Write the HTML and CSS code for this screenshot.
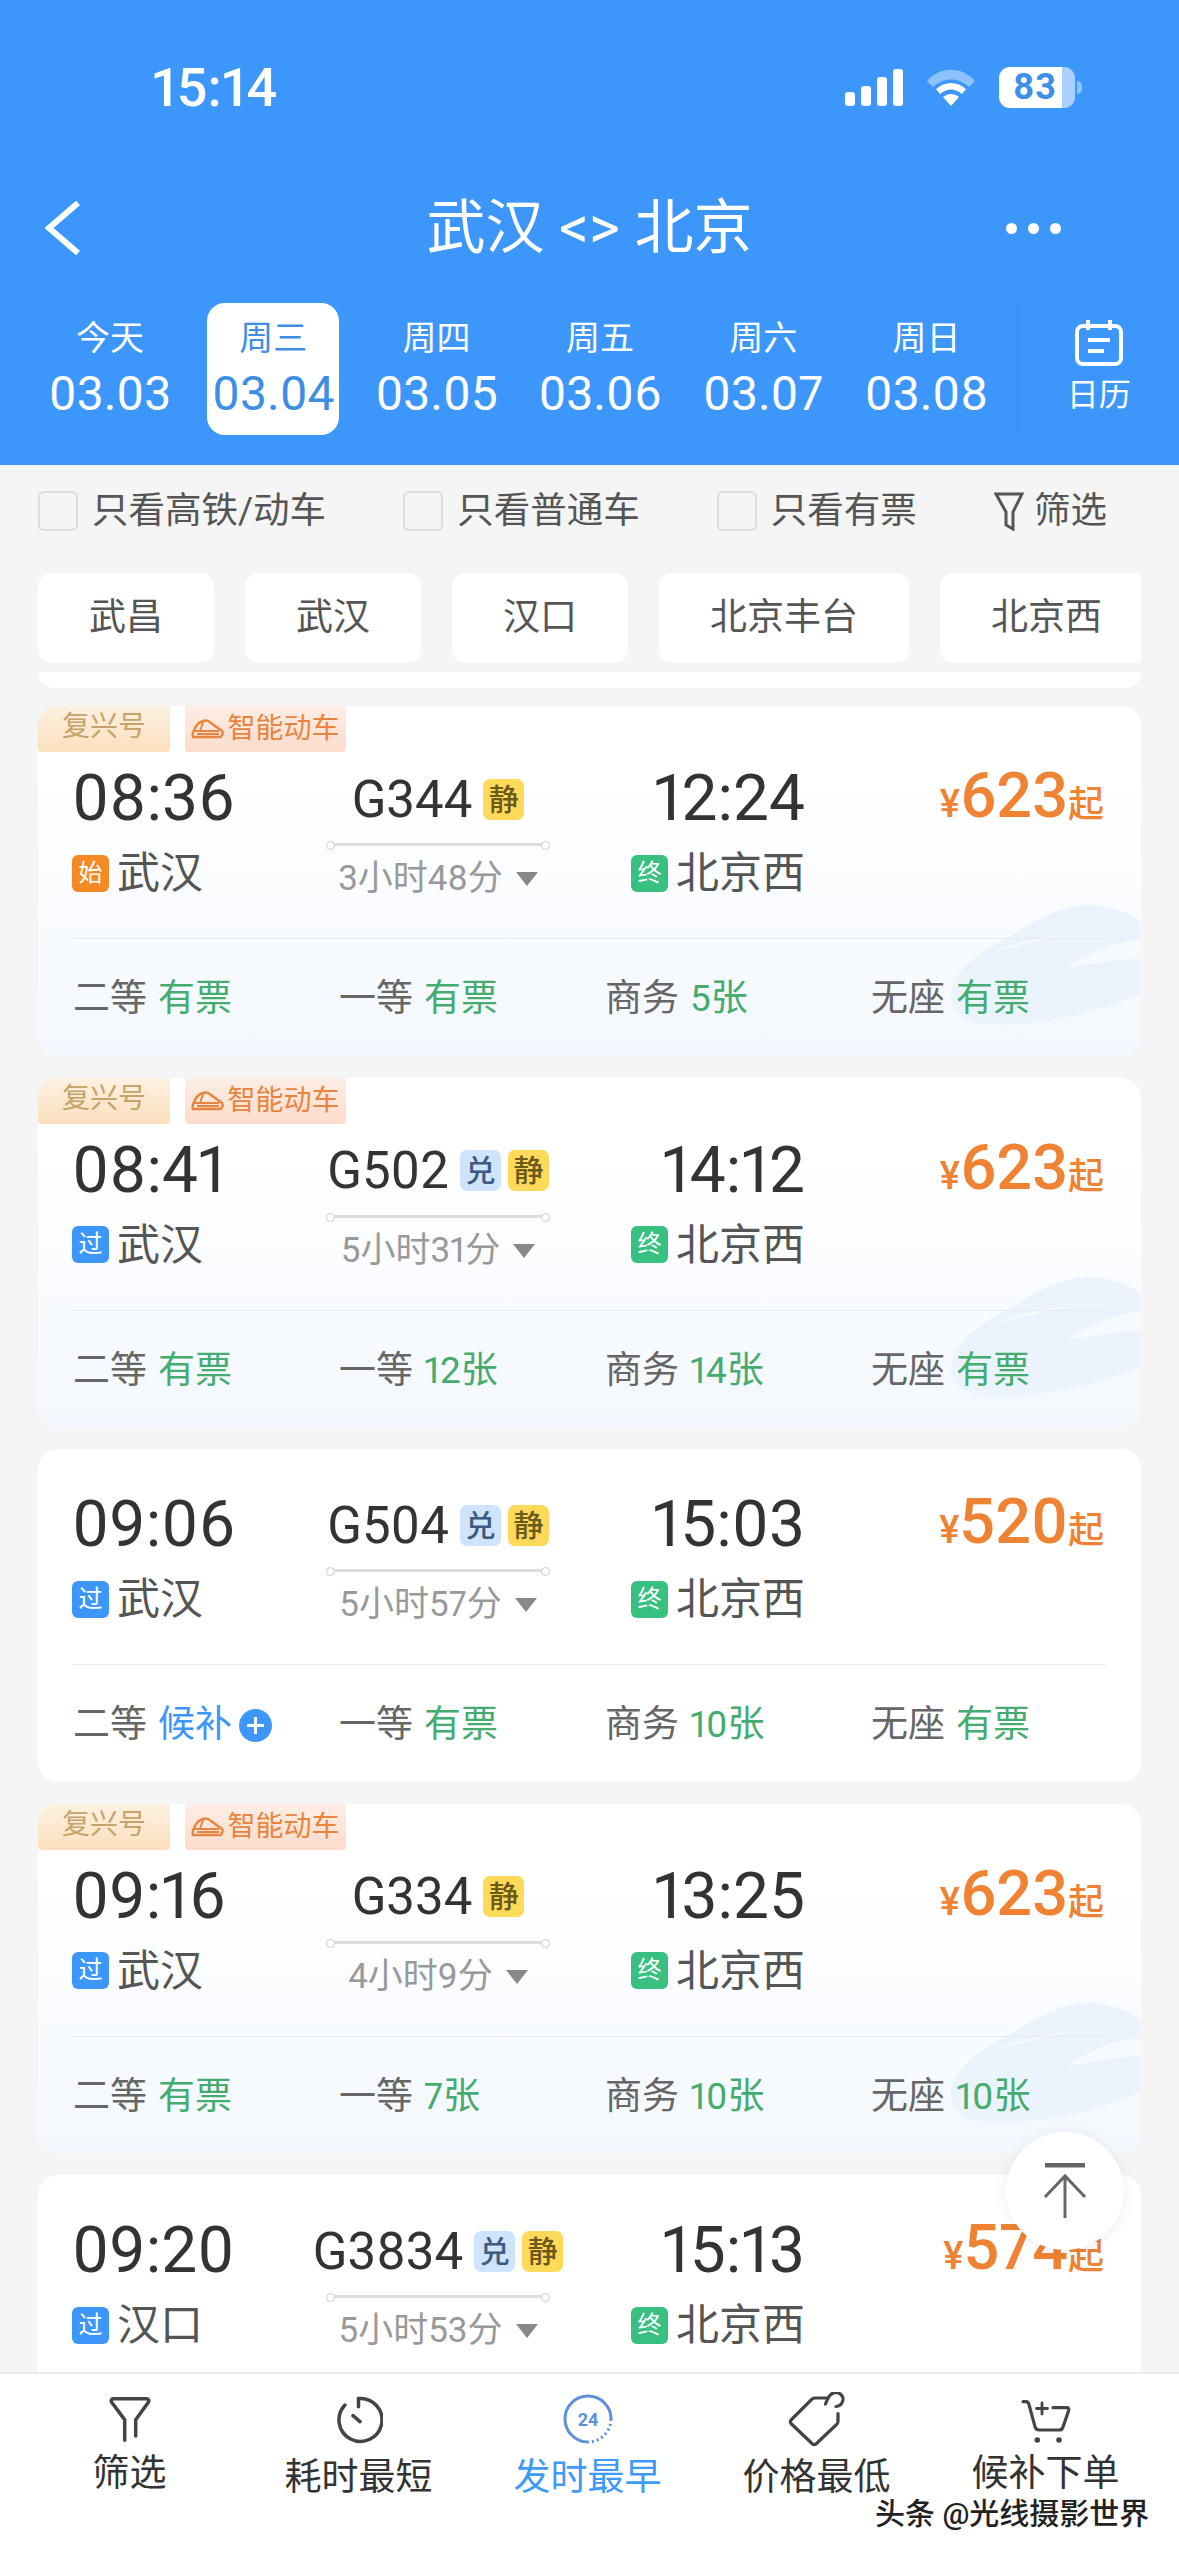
FILE: index.html
```html
<!DOCTYPE html>
<html lang="zh-CN">
<head>
    <meta charset="UTF-8">
    <meta name="viewport" content="width=device-width, initial-scale=1.0">
    <title>武汉 - 北京</title>
    <link rel="stylesheet" href="styles.css">
</head>
<body>
    <svg class="defs" width="0" height="0">
        <symbol id="swoosh" viewBox="0 0 190 122">
            <path d="M190 17C170 4 150 0 135 1 105 3 80 20 55 35 30 48 5 65 1 88c-2 18 12 30 35 32 50 3 110-10 154-30z" fill="#ebf4fd"/>
            <path d="M117 64c20-14 45-26 73-28v18c-25 2-50 6-73 10z" fill="#f6fafe"/>
            <path d="M40 49c25-10 50-16 78-19-25 6-50 12-78 19z" fill="#f6fafe"/>
        </symbol>
        <symbol id="mini-train" viewBox="0 0 33 20">
            <path d="M2 18c-1-2 0-5 1-7 2-5 5-8 9-9 3-1 6 0 8 2l11 8c1 1 1 3 0 4-.4 1-1 2-2 2z" fill="none" stroke="currentColor" stroke-width="2.4"/>
            <path d="M3 12h25M12 3l-3 9M6 15h22" fill="none" stroke="currentColor" stroke-width="2"/>
        </symbol>
    </svg>

    <div class="page">
        <header class="header">
            <div class="status">
                <span class="clock">15:14</span>
                <div class="status-icons">
                    <svg class="signal" viewBox="0 0 58 37" width="58" height="37">
                        <rect x="0" y="23" width="10" height="14" rx="3"/>
                        <rect x="16" y="17" width="10" height="20" rx="3"/>
                        <rect x="32" y="8" width="10" height="29" rx="3"/>
                        <rect x="48" y="0" width="10" height="37" rx="3"/>
                    </svg>
                    <svg class="wifi" viewBox="0 0 50 37" width="50" height="37">
                        <path d="M1 12C14-3 36-3 49 12l-6 6C32 8 18 8 7 18z" fill="#8cc2fd"/>
                        <path d="M10 20c9-8 21-8 30 0l-4 5c-7-6-15-6-22 0z"/>
                        <path d="M17 28c5-4 11-4 16 0l-8 9z"/>
                    </svg>
                    <div class="battery"><span>83</span></div>
                </div>
            </div>

            <div class="nav">
                <svg class="back" viewBox="0 0 36 54" width="36" height="54"><path d="M33 2L4 27l29 25" fill="none" stroke="#fff" stroke-width="6"/></svg>
                <h1>武汉 &lt;&gt; 北京</h1>
                <div class="more"><i></i><i></i><i></i></div>
            </div>

            <div class="dates">
                <div class="date-tab"><span>今天</span><b>03.03</b></div>
                <div class="date-tab active"><span>周三</span><b>03.04</b></div>
                <div class="date-tab"><span>周四</span><b>03.05</b></div>
                <div class="date-tab"><span>周五</span><b>03.06</b></div>
                <div class="date-tab"><span>周六</span><b>03.07</b></div>
                <div class="date-tab"><span>周日</span><b>03.08</b></div>
                <div class="calendar">
                    <svg viewBox="0 0 48 46" width="48" height="46" fill="none" stroke="#fff" stroke-width="4">
                        <rect x="2" y="6" width="44" height="38" rx="6"/>
                        <path d="M13 0v10M35 0v10M13 20h22M13 31h16"/>
                    </svg>
                    <span>日历</span>
                </div>
            </div>
        </header>

        <div class="filters">
            <label class="check"><i></i>只看高铁/动车</label>
            <label class="check"><i></i>只看普通车</label>
            <label class="check"><i></i>只看有票</label>
            <div class="check funnel">
                <svg viewBox="0 0 30 40" width="30" height="40" fill="none" stroke="#555" stroke-width="3"><path d="M2 3h26L19 21v17l-7-4V21z"/></svg>
                筛选
            </div>
        </div>

        <div class="stations">
            <div class="station-chip">武昌</div>
            <div class="station-chip">武汉</div>
            <div class="station-chip">汉口</div>
            <div class="station-chip">北京丰台</div>
            <div class="station-chip">北京西</div>
        </div>

        <div class="list">
            <div class="card-end"></div>

            <div class="card fuxing">
                <svg class="swoosh"><use href="#swoosh"/></svg>
                <div class="labels"><span class="label-fx">复兴号</span><span class="label-smart"><svg width="33" height="20"><use href="#mini-train"/></svg>智能动车</span></div>
                <div class="info">
                    <div class="dep"><div class="time">08:36</div><div class="place"><i class="st start">始</i>武汉</div></div>
                    <div class="mid">
                        <div class="train">G344<i class="mark quiet">静</i></div>
                        <div class="line"></div>
                        <div class="duration">3小时48分<i class="caret"></i></div>
                    </div>
                    <div class="arr"><div class="time">12:24</div><div class="place"><i class="st end">终</i>北京西</div></div>
                    <div class="price"><small>¥</small>623<em>起</em></div>
                </div>
                <div class="seats">
                    <div class="seat">二等 <b>有票</b></div>
                    <div class="seat">一等 <b>有票</b></div>
                    <div class="seat">商务 <b>5张</b></div>
                    <div class="seat">无座 <b>有票</b></div>
                </div>
            </div>

            <div class="card fuxing">
                <svg class="swoosh"><use href="#swoosh"/></svg>
                <div class="labels"><span class="label-fx">复兴号</span><span class="label-smart"><svg width="33" height="20"><use href="#mini-train"/></svg>智能动车</span></div>
                <div class="info">
                    <div class="dep"><div class="time">08:41</div><div class="place"><i class="st pass">过</i>武汉</div></div>
                    <div class="mid">
                        <div class="train">G502<i class="mark swap">兑</i><i class="mark quiet">静</i></div>
                        <div class="line"></div>
                        <div class="duration">5小时31分<i class="caret"></i></div>
                    </div>
                    <div class="arr"><div class="time">14:12</div><div class="place"><i class="st end">终</i>北京西</div></div>
                    <div class="price"><small>¥</small>623<em>起</em></div>
                </div>
                <div class="seats">
                    <div class="seat">二等 <b>有票</b></div>
                    <div class="seat">一等 <b>12张</b></div>
                    <div class="seat">商务 <b>14张</b></div>
                    <div class="seat">无座 <b>有票</b></div>
                </div>
            </div>

            <div class="card">
                <div class="info">
                    <div class="dep"><div class="time">09:06</div><div class="place"><i class="st pass">过</i>武汉</div></div>
                    <div class="mid">
                        <div class="train">G504<i class="mark swap">兑</i><i class="mark quiet">静</i></div>
                        <div class="line"></div>
                        <div class="duration">5小时57分<i class="caret"></i></div>
                    </div>
                    <div class="arr"><div class="time">15:03</div><div class="place"><i class="st end">终</i>北京西</div></div>
                    <div class="price"><small>¥</small>520<em>起</em></div>
                </div>
                <div class="seats">
                    <div class="seat">二等 <b class="wait">候补</b><i class="plus"></i></div>
                    <div class="seat">一等 <b>有票</b></div>
                    <div class="seat">商务 <b>10张</b></div>
                    <div class="seat">无座 <b>有票</b></div>
                </div>
            </div>

            <div class="card fuxing">
                <svg class="swoosh"><use href="#swoosh"/></svg>
                <div class="labels"><span class="label-fx">复兴号</span><span class="label-smart"><svg width="33" height="20"><use href="#mini-train"/></svg>智能动车</span></div>
                <div class="info">
                    <div class="dep"><div class="time">09:16</div><div class="place"><i class="st pass">过</i>武汉</div></div>
                    <div class="mid">
                        <div class="train">G334<i class="mark quiet">静</i></div>
                        <div class="line"></div>
                        <div class="duration">4小时9分<i class="caret"></i></div>
                    </div>
                    <div class="arr"><div class="time">13:25</div><div class="place"><i class="st end">终</i>北京西</div></div>
                    <div class="price"><small>¥</small>623<em>起</em></div>
                </div>
                <div class="seats">
                    <div class="seat">二等 <b>有票</b></div>
                    <div class="seat">一等 <b>7张</b></div>
                    <div class="seat">商务 <b>10张</b></div>
                    <div class="seat">无座 <b>10张</b></div>
                </div>
            </div>

            <div class="card">
                <div class="info">
                    <div class="dep"><div class="time">09:20</div><div class="place"><i class="st pass">过</i>汉口</div></div>
                    <div class="mid">
                        <div class="train">G3834<i class="mark swap">兑</i><i class="mark quiet">静</i></div>
                        <div class="line"></div>
                        <div class="duration">5小时53分<i class="caret"></i></div>
                    </div>
                    <div class="arr"><div class="time">15:13</div><div class="place"><i class="st end">终</i>北京西</div></div>
                    <div class="price"><small>¥</small>574<em>起</em></div>
                </div>
            </div>
        </div>

        <div class="to-top">
            <svg viewBox="0 0 44 56" width="44" height="56" fill="none" stroke="#666">
                <path d="M2 2h40" stroke-width="5"/>
                <path d="M22 55V14M2 34l20-21 20 21" stroke-width="3"/>
            </svg>
        </div>

        <nav class="tabbar">
            <div class="tab first">
                <svg viewBox="0 0 42 48" width="42" height="48" fill="none" stroke="#444" stroke-width="3.5" stroke-linecap="round"><path d="M15.7 44.3V23.7L2.5 6c-.8-1.5 0-3.3 2-3.3h33c2 0 2.8 1.8 2 3.3L26.7 23.7V40"/></svg>
                <span>筛选</span>
            </div>
            <div class="tab">
                <svg class="raised" viewBox="0 0 48 48" width="48" height="48" fill="none" stroke="#444" stroke-width="3.5" stroke-linecap="round"><path d="M10 9A21.5 21.5 0 1 0 23.5 2.5v8.2M18 19.7l7 6"/></svg>
                <span>耗时最短</span>
            </div>
            <div class="tab current">
                <svg class="raised" viewBox="0 0 50 50" width="50" height="50" fill="none" stroke="#5f8fdc" stroke-width="3">
                    <path d="M25 48A23 23 0 1 1 48 25"/>
                    <path d="M48 25A23 23 0 0 1 25 48" stroke-dasharray="2 3"/>
                    <text class="icon-num" x="25" y="32" text-anchor="middle">24</text>
                </svg>
                <span>发时最早</span>
            </div>
            <div class="tab">
                <svg viewBox="0 0 58 56" width="58" height="56" fill="none" stroke="#444" stroke-width="3.2" stroke-linecap="round"><path d="M40 6H27c-1 0-2 .4-3 1L3.500 27.500c-1.500 1.500-1.500 3 0 4.500L24 51.500c1.500 1.500 3 1.500 4.500 0L48 33c1.300-1 2-2 2-3.500v-8"/><path d="M37.500 12c2-5 4-11 10-11.500 5 0 8 4 7.500 7.500-.5 3-3 6-7 6.500"/></svg>
                <span>价格最低</span>
            </div>
            <div class="tab last">
                <svg viewBox="0 0 56 46" width="56" height="46" fill="none" stroke="#444" stroke-width="3.2" stroke-linecap="round"><path d="M5 3.700h3c2 0 2.500 1 3 3l6 22c.6 2.500 2 3.300 4 3.300h20c2.500 0 3.500-1 4-3l5.500-16c.8-2.500 0-3.300-2-3.300H35"/><path d="M24 5v11M18.500 10.500h11" stroke-width="2.800"/><circle cx="19.300" cy="42" r="2.800" fill="#444" stroke="none"/><circle cx="41" cy="42" r="2.800" fill="#444" stroke="none"/></svg>
                <span>候补下单</span>
            </div>
        </nav>

        <div class="credit">头条 @光线摄影世界</div>
    </div>
</body>
</html>
```

FILE: styles.css
```css
* {
    box-sizing: border-box;
}
html, body {
    margin: 0;
    padding: 0;
}
body {
    font-family: Roboto, "Noto Sans CJK SC", sans-serif;
    font-variant-numeric: proportional-nums;
    background: #f5f5f5;
    color: #555;
}
i, em {
    font-style: normal;
}
.defs {
    position: absolute;
}
.page {
    position: relative;
    width: 1179px;
    height: 2556px;
    display: flex;
    flex-direction: column;
    overflow: hidden;
    background: #f5f5f5;
}

/* header */
.header {
    height: 465px;
    flex: none;
    background: #3d97fb;
    color: #fff;
    overflow: hidden;
}
.status {
    height: 174px;
    display: flex;
    align-items: center;
    justify-content: space-between;
    padding: 0 104px 0 152px;
}
.clock {
    font-size: 54px;
    font-weight: 500;
}
.status-icons {
    display: flex;
    align-items: center;
    gap: 23px;
}
.signal, .wifi {
    fill: #fff;
}
.battery {
    position: relative;
    width: 76px;
    height: 41px;
    border-radius: 11px;
    background: linear-gradient(to right, #fff 83%, #a8d0fd 83%);
    color: #3d8fe8;
    font-size: 36px;
    font-weight: 700;
    letter-spacing: 1px;
    line-height: 41px;
    padding-left: 14px;
}
.battery::after {
    content: "";
    position: absolute;
    left: 78px;
    top: 14px;
    width: 5px;
    height: 13px;
    border-radius: 0 6px 6px 0;
    background: #8cc2fd;
}
.nav {
    height: 108px;
    position: relative;
    display: flex;
    align-items: center;
    justify-content: center;
}
.nav h1 {
    margin: 0;
    font-size: 59px;
    font-weight: 400;
    line-height: 70px;
}
.back {
    position: absolute;
    left: 45px;
    top: 27px;
}
.more {
    position: absolute;
    left: 1006px;
    top: 49px;
    display: flex;
    gap: 11px;
}
.more i {
    width: 11px;
    height: 11px;
    border-radius: 50%;
    background: #fff;
}
.dates {
    display: flex;
    margin-top: 21px;
    padding-left: 44px;
    gap: 31.3px;
}
.date-tab {
    flex: none;
    width: 132px;
    height: 132px;
    display: flex;
    flex-direction: column;
    align-items: center;
    padding-top: 13px;
    border-radius: 18px;
}
.date-tab span {
    font-size: 34px;
    line-height: 44px;
}
.date-tab b {
    font-size: 48px;
    font-weight: 400;
    line-height: 56px;
    margin-top: 6px;
}
.date-tab.active {
    background: #fff;
    color: #3d8ee4;
}
.calendar {
    flex: none;
    width: 166px;
    margin-left: -8px;
    padding-top: 17px;
    display: flex;
    flex-direction: column;
    align-items: center;
    background: linear-gradient(to right, rgba(30, 90, 190, .06), rgba(30, 90, 190, 0) 22px);
}
.calendar span {
    font-size: 32px;
    line-height: 44px;
    margin-top: 7px;
}

/* filters */
.filters {
    height: 92px;
    flex: none;
    display: flex;
    align-items: center;
    justify-content: space-between;
    padding: 0 72px 0 38px;
    font-size: 36.5px;
}
.check {
    display: flex;
    align-items: center;
    gap: 14px;
    line-height: 48px;
}
.check i {
    width: 40px;
    height: 40px;
    border: 2px solid #ddd;
    border-radius: 6px;
    background: #f5f5f5;
}
.funnel {
    gap: 10px;
}
.stations {
    width: 1141px;
    flex: none;
    display: flex;
    gap: 31px;
    margin-top: 16px;
    padding-left: 38px;
    overflow: hidden;
}
.station-chip {
    flex: none;
    height: 90px;
    padding: 0 51px;
    border-radius: 14px;
    background: #fff;
    font-size: 37px;
    line-height: 90px;
    white-space: nowrap;
}

/* train list */
.list {
    flex: 1;
    min-height: 0;
    margin-top: 9px;
    padding: 0 38px;
    overflow: hidden;
    display: flex;
    flex-direction: column;
    gap: 21.5px;
}
.card-end {
    height: 16px;
    flex: none;
    margin-bottom: -3.5px;
    background: #fff;
    border-radius: 0 0 18px 18px;
}
.card {
    position: relative;
    flex: none;
    padding: 44px 35px 37px;
    border-radius: 20px;
    overflow: hidden;
    background: #fff;
}
.card.fuxing {
    padding-top: 0;
    background: linear-gradient(#fff 20%, #f3f8fe 100%);
}
.swoosh {
    position: absolute;
    right: 1px;
    bottom: 30px;
    width: 190px;
    height: 122px;
}
.labels {
    position: relative;
    margin: 0 -35px 15px;
    height: 46px;
    display: flex;
    gap: 15px;
    font-size: 28px;
    line-height: 42px;
}
.label-fx {
    width: 132px;
    text-align: center;
    color: #c6a368;
    border-radius: 0 0 4px 4px;
    background: linear-gradient(#fdf1e2, #fbdfbd);
}
.label-smart {
    width: 161px;
    display: flex;
    align-items: center;
    justify-content: center;
    gap: 3px;
    color: #e8843e;
    border-radius: 0 0 4px 4px;
    background: linear-gradient(#fdeee6, #fbdccb);
}
.info {
    position: relative;
    display: flex;
}
.dep {
    width: 256px;
}
.dep .time {
    margin-left: -1px;
}
.arr {
    width: 258px;
    display: flex;
    flex-direction: column;
    align-items: flex-end;
}
.time {
    font-size: 64px;
    line-height: 64px;
    color: #333;
}
.place {
    display: flex;
    align-items: center;
    height: 40px;
    margin-top: 22px;
    font-size: 43px;
    line-height: 40px;
    color: #555;
}
.st {
    width: 37px;
    height: 37px;
    margin-right: 8px;
    margin-left: -1px;
    border-radius: 6px;
    color: #fff;
    font-size: 24px;
    line-height: 37px;
    text-align: center;
}
.st.start {
    background: #f58a24;
}
.st.pass {
    background: #3d97fb;
}
.st.end {
    background: #37c07f;
}
.mid {
    width: 218px;
    display: flex;
    flex-direction: column;
    align-items: center;
}
.train {
    height: 64px;
    display: flex;
    align-items: center;
    justify-content: center;
    font-size: 51px;
    color: #333;
    white-space: nowrap;
}
.mark {
    width: 41px;
    height: 41px;
    margin-left: 7px;
    border-radius: 7px;
    font-size: 30px;
    font-weight: 500;
    line-height: 41px;
    text-align: center;
}
.train .mark:first-of-type {
    margin-left: 11px;
}
.mark.quiet {
    background: #ffd95a;
    color: #6b5a1a;
}
.mark.swap {
    background: #cfe3fb;
    color: #3d5a80;
}
.line {
    position: relative;
    width: 100%;
    height: 3px;
    margin-top: 12px;
    background: #ddd;
}
.line::before, .line::after {
    content: "";
    position: absolute;
    top: -2px;
    width: 7px;
    height: 7px;
    border: 1px solid #ccc;
    border-radius: 50%;
    background: #fff;
}
.line::before {
    left: -3px;
}
.line::after {
    right: -3px;
}
.duration {
    display: flex;
    align-items: center;
    height: 40px;
    margin-top: 13px;
    font-size: 35px;
    line-height: 40px;
    color: #999;
    white-space: nowrap;
}
.caret {
    width: 0;
    height: 0;
    margin-left: 13px;
    border-left: 11px solid transparent;
    border-right: 11px solid transparent;
    border-top: 14px solid #888;
}
.price {
    flex: 1;
    text-align: right;
    margin-right: 2px;
    font-size: 63px;
    font-weight: 500;
    line-height: 58px;
    color: #ef8233;
}
.price small {
    font-size: 38px;
}
.price em {
    font-size: 36px;
    font-weight: 500;
}
.seats {
    position: relative;
    display: grid;
    grid-template-columns: repeat(4, 266px);
    margin-top: 39px;
    padding-top: 40px;
    border-top: 1px solid #e9e9e9;
    font-size: 37px;
    line-height: 40px;
    color: #666;
}
.seat {
    display: flex;
    align-items: center;
    gap: 11px;
    white-space: nowrap;
}
.seat b {
    font-weight: 400;
    color: #45ab6f;
}
.seat b.wait {
    color: #3d97fb;
}
.plus {
    position: relative;
    width: 33px;
    height: 33px;
    margin-left: -4px;
    border-radius: 50%;
    background: #3d97fb;
}
.plus::before, .plus::after {
    content: "";
    position: absolute;
    background: #fff;
}
.plus::before {
    left: 8px;
    top: 15px;
    width: 17px;
    height: 3px;
}
.plus::after {
    left: 15px;
    top: 8px;
    width: 3px;
    height: 17px;
}

/* floating */
.to-top {
    position: absolute;
    left: 1006px;
    top: 2132px;
    width: 118px;
    height: 118px;
    border-radius: 50%;
    background: #fff;
    box-shadow: 0 2px 14px rgba(0, 0, 0, .08);
    display: flex;
    align-items: center;
    justify-content: center;
}

/* bottom bar */
.tabbar {
    height: 184px;
    flex: none;
    position: relative;
    display: grid;
    grid-template-columns: repeat(5, 229px);
    padding-left: 15px;
    background: #fff;
    border-top: 2px solid #ececec;
}
.tab {
    display: flex;
    flex-direction: column;
    align-items: center;
    height: 124px;
    justify-content: flex-end;
}
.tab .raised {
    margin-bottom: 4px;
}
.tab span {
    font-size: 37px;
    line-height: 44px;
    color: #333;
    margin-top: 8px;
    margin-bottom: -2px;
}
.tab.first span, .tab.last span {
    margin-bottom: 2px;
}
.tab.current span {
    color: #3f9af5;
}
.icon-num {
    font-size: 18px;
    font-weight: 700;
    fill: #5f8fdc;
    stroke: none;
}
.credit {
    position: absolute;
    left: 875px;
    top: 2494px;
    font-size: 30px;
    font-weight: 500;
    line-height: 40px;
    color: #222;
    white-space: nowrap;
    text-shadow: 0 0 2px #fff;
}
```
